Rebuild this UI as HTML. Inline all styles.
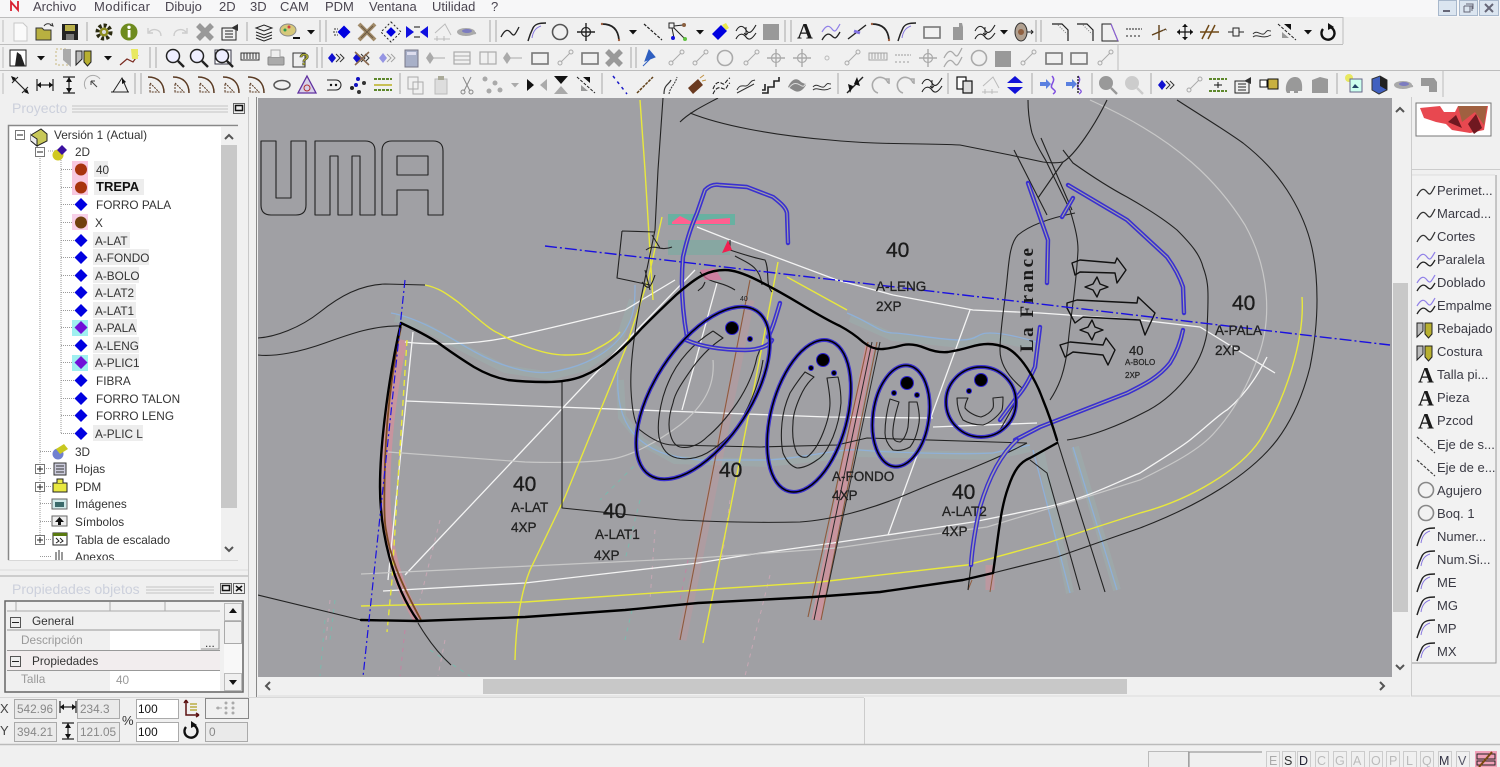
<!DOCTYPE html>
<html><head><meta charset="utf-8"><title>CAD</title>
<style>
html,body{margin:0;padding:0;background:#f0f0f0;width:1500px;height:767px;overflow:hidden}
svg{display:block;filter:blur(.35px)}
text{font-family:"Liberation Sans",sans-serif}
.m{font-size:13px;fill:#4a4550}
.t{font-size:11.8px;fill:#333}
.l{font-size:13px;fill:#3a3a44}
.n{fill:#1c1c1c;font-size:21px;stroke:#1c1c1c;stroke-width:.35}
.s{fill:#222;font-size:13.5px;stroke:#222;stroke-width:.3}
.c{fill:none;stroke:#222;stroke-width:1.1;stroke-linejoin:round}
.w{fill:none;stroke:#f4f4f4;stroke-width:1.3}
.g{fill:none;stroke:#c8c8c8;stroke-width:1.2}
.y{fill:none;stroke:#e8e83c;stroke-width:1.4}
.b{fill:none;stroke:#8fb0d8;stroke-width:1.3}
.k{fill:none;stroke:#000;stroke-width:2.4;stroke-linejoin:round;stroke-linecap:round}
.bd{fill:none;stroke:#3a30d0;stroke-width:4.4;stroke-linecap:round;stroke-linejoin:round}
.bi{fill:none;stroke:#a0a0a4;stroke-width:1.2}
.r{fill:none;stroke:#8f5a3c;stroke-width:1.1}
.p{fill:none;stroke:#c8949e;stroke-width:9}
.f{fill:#f0f0f0;stroke:#b0b0b0}
</style></head><body>
<svg width="1500" height="767" viewBox="0 0 1500 767" xmlns="http://www.w3.org/2000/svg">
<defs>
<g id="doc"><path d="M-6-9H3L7-5V9H-6Z" fill="#fafafa" stroke="#c8c8c8"/></g>
<g id="open"><path d="M-9 8V-4H-3L-1-2H6V8Z" fill="#b8b040" stroke="#333"/><path d="M-1-6C1-9 5-9 7-6M5-7L8-6L7-9" fill="none" stroke="#333"/></g>
<g id="save"><rect x="-8" y="-8" width="16" height="16" fill="#222"/><rect x="-5" y="-7" width="10" height="6" fill="#b9b04a"/><rect x="-4" y="2" width="8" height="6" fill="#777"/></g>
<g id="gear"><circle r="6.5" fill="none" stroke="#2a2a10" stroke-width="4" stroke-dasharray="3 2"/><circle r="4.5" fill="#8d8d20"/><circle r="2" fill="#ddd"/></g>
<g id="info"><circle r="8.5" fill="#6e8b1f"/><rect x="-1.3" y="-2" width="2.8" height="7.5" fill="#fff"/><circle cy="-4.7" r="1.7" fill="#fff"/></g>
<g id="und"><path d="M6 4C6-3-2-4-6 0M-7-4V1H-2" fill="none" stroke="#ccc" stroke-width="1.4"/></g>
<g id="red"><path d="M-6 4C-6-3 2-4 6 0M7-4V1H2" fill="none" stroke="#ccc" stroke-width="1.4"/></g>
<g id="bx"><path d="M-7-7L7 7M7-7L-7 7" stroke="#999" stroke-width="5.5"/></g>
<g id="prop"><rect x="-8" y="-4" width="14" height="12" fill="#eee" stroke="#222"/><path d="M-5-1H3M-5 2H3M-5 5H3" stroke="#222"/><path d="M1-4L8-8V-1Z" fill="#333"/></g>
<g id="lay"><path d="M-8-4L0-7L8-4L0-1Z" fill="#eee" stroke="#222"/><path d="M-8 0L0 3L8 0M-8 3L0 6L8 3M-8 6L0 9L8 6" fill="none" stroke="#222"/></g>
<g id="pal"><ellipse cx="-2" cy="-2" rx="8" ry="6" fill="#d6c87a" stroke="#888"/><circle cx="-5" cy="-2" r="1.5" fill="#2a9a4a"/><circle cx="-1" cy="-5" r="1.5" fill="#d04040"/><rect x="3" y="5" width="7" height="2" fill="#111"/></g>
<g id="dr"><path d="M-4-2H4L0 2.5Z" fill="#111"/></g>
<g id="dg"><path d="M-4-2H4L0 2.5Z" fill="#aaa"/></g>
<g id="di"><path d="M0-6.5L6.5 0L0 6.5L-6.5 0Z" fill="#0000e0"/></g>
<g id="dfw"><use href="#di" x="1"/><path d="M-9-3H-5M-10 0H-6M-9 3H-5" stroke="#333" stroke-dasharray="2 1"/></g>
<g id="dx"><path d="M-8-8L8 8M8-8L-8 8" stroke="#a08a68" stroke-width="4"/><path d="M-6-6L6 6M6-6L-6 6" stroke="#6a5a44" stroke-width="1"/></g>
<g id="d2"><use href="#di" transform="scale(.75)"/><path d="M0-10L10 0L0 10L-10 0Z" fill="none" stroke="#222" stroke-dasharray="2 2"/></g>
<g id="dlr"><path d="M-11-6L-3 0L-11 6ZM11-6L3 0L11 6Z" fill="#1010e0"/><path d="M-3-5H3M-3 5H3" stroke="#111"/></g>
<g id="tree"><path d="M-8 7H8M-7 1L3-8L9 3" fill="none" stroke="#bbb"/><path d="M-5 4V9M2 4V9" stroke="#bbb"/></g>
<g id="eye"><ellipse cx="-1" rx="9" ry="4" fill="#aaa"/><path d="M-2 3L9 1" stroke="#aaa" stroke-width="2"/><ellipse cx="0" cy="-1" rx="5" ry="2" fill="#7c7cc0"/></g>
<g id="wv"><path d="M-9 5C-5-3-2-3 1 1S5 3 9-5" class="ci" fill="none" stroke="currentColor" stroke-width="1.3"/></g>
<g id="wp"><path d="M-9 -1C-5-8-2-8 1-4S5-2 9-9" fill="none" stroke="#9080e8" stroke-width="1.2"/><path d="M-9 7C-5 0-2 0 1 3S5 6 9-1" fill="none" stroke="#222" stroke-width="1.3"/></g>
<g id="ns"><path d="M-9 9C-7 2-6 0-4-4S2-9 9-9" fill="none" stroke="#222" stroke-width="1.4"/><path d="M-5 6C-4 0-2-4 4-6" fill="none" stroke="#8878e0"/></g>
<g id="cir"><circle r="7.5" fill="none" stroke="currentColor" stroke-width="1.6"/></g>
<g id="cross"><circle r="4.5" fill="none" stroke="currentColor" stroke-width="1.2"/><path d="M-9 0H9M0-9V9" stroke="currentColor" stroke-width="1.4"/></g>
<g id="arc"><path d="M-9-8C0-8 7-4 8 8" fill="none" stroke="#222" stroke-width="1.7"/><circle cx="-9" cy="-8" r="1.2" fill="#a06040"/><circle cx="8" cy="8" r="1.2" fill="#a06040"/></g>
<g id="dash"><path d="M-9-8L9 8" stroke="currentColor" stroke-width="1.2" stroke-dasharray="3 1.5"/></g>
<g id="ang"><rect x="-9" y="-9" width="5" height="5" fill="none" stroke="#222"/><path d="M-6-4L-4 6M-4-6L5-7M-4-4L6 6" stroke="#222"/><circle cx="-5" cy="6" r="2" fill="#1010e0"/><circle cx="6" cy="-7" r="2" fill="#8a6040"/><circle cx="7" cy="7" r="2" fill="#60c040"/></g>
<g id="cube"><path d="M-8 2L1-7L7-1L-2 8Z" fill="#0000e0"/><path d="M2-7L6-9L9-4L6-2Z" fill="#e8e850"/></g>
<g id="wwa"><path d="M-10-1C-7-7-3-7 0-2S6 0 10-7M-10 7C-7 1-3 1 0 5S6 7 10 1" fill="none" stroke="#222" stroke-width="1.1"/><path d="M0-5V3M-2 1L0 3L2 1" fill="none" stroke="#222"/></g>
<g id="sq"><rect x="-8" y="-8" width="16" height="16" fill="#999"/></g>
<g id="A"><text x="-8" y="6.500" style="font-family:'Liberation Serif',serif;font-weight:700;font-size:22px" fill="#1a1a1a">A</text></g>
<g id="ln1"><path d="M-9 7L9-7" stroke="#222" stroke-width="1.4"/><path d="M-3-1L3 1" stroke="#8070e0" stroke-width="3"/></g>
<g id="rc"><rect x="-8" y="-5" width="16" height="11" fill="none" stroke="#777" stroke-width="1.6"/></g>
<g id="sil"><path d="M-5-5L1-5L1-9H4L5-5V8H-5Z" fill="#999"/></g>
<g id="bb"><ellipse rx="6" ry="9" fill="#b0a090" stroke="#333"/><circle r="3" fill="#906040"/><path d="M6 0H12M10-2L12 0L10 2" fill="none" stroke="#222"/></g>
<g id="cor"><path d="M-8-8H2L8-2V9" fill="none" stroke="#222" stroke-width="1.2"/><path d="M-2-7L7 2" stroke="#777" stroke-dasharray="1 1.5"/></g>
<g id="qd"><path d="M-8-8H1L8 9H-8Z" fill="none" stroke="#222"/><path d="M1-8L8 9" stroke="#9060e0"/></g>
<g id="rul"><path d="M-8-3H8M-7 3V5M-3 3V5M1 3V5M5 3V5" stroke="#222" stroke-dasharray="2 1"/></g>
<g id="br"><path d="M-8 3L6-3" stroke="#604018" stroke-width="1.4"/><path d="M-1-7L-1 8" stroke="#604018" stroke-width="1.4"/><path d="M3-2H9" stroke="#777" stroke-dasharray="1 2"/></g>
<g id="mv"><path d="M-8 0H8M0-8V8" stroke="#111" stroke-width="1.2"/><path d="M-8 0L-5-3V3ZM8 0L5-3V3ZM0-8L-3-5H3ZM0 8L-3 5H3Z" fill="#111"/></g>
<g id="par"><path d="M-7 7L0-7M-1 7L6-7M-9 0H10" stroke="#704a18" stroke-width="1.5"/></g>
<g id="nod"><rect x="-3" y="-4" width="6" height="8" fill="none" stroke="#222"/><path d="M-8 0H-3M3 0H8" stroke="#222"/></g>
<g id="mir"><path d="M-9-8L9 8" stroke="#222" stroke-dasharray="3 1.5"/><path d="M-3-8L4-8L4-2Z" fill="#111"/><path d="M-5 0L2 6H-5Z" fill="#999"/></g>
<g id="rot"><path d="M-5-4A6.5 6.5 0 1 0 2-6" fill="none" stroke="#111" stroke-width="2.4"/><path d="M0-10V-3L6-6Z" fill="#111"/></g>
<g id="cat"><rect x="-8" y="-8" width="16" height="16" fill="#fff" stroke="#222"/><path d="M-3 8L-1-6L3-3L7 8Z" fill="#222"/></g>
<g id="pen"><path d="M-9 7V-7H-3V1Z" fill="#bbb" stroke="#222"/><path d="M-1-7H6V4L2.500 8L-1 4Z" fill="#b8b030" stroke="#222"/></g>
<g id="ptag"><path d="M-9 7L-2 1L4 4L9-3" fill="none" stroke="#7a2a20" stroke-width="1.2"/><path d="M2-9H9V1L3 1Z" fill="#e8e860"/></g>
<g id="ppen"><rect x="-6" y="-9" width="12" height="16" fill="none" stroke="#c8b880" stroke-dasharray="2 2"/><path d="M1-9H9V9L1 2Z" fill="#aaa"/></g>
<g id="zoomic"><circle cx="-2" cy="-2" r="6.5" fill="#eef" stroke="#222" stroke-width="1.5"/><path d="M3 3L9 9" stroke="#222" stroke-width="2.4"/></g>
<g id="mag"><circle cx="-2" cy="-2" r="6.5" fill="currentColor" stroke="currentColor"/><path d="M3 3L9 9" stroke="currentColor" stroke-width="2.4"/></g>
<g id="zoo2"><rect x="-9" y="-8" width="16" height="14" fill="#fff" stroke="#334"/><use href="#zoomic"/></g>
<g id="prin"><rect x="-8" y="-1" width="16" height="8" rx="1" fill="#aaa" stroke="#888"/><path d="M-5-1V-8H4V-1" fill="#eee" stroke="#aaa"/></g>
<g id="hlp"><rect x="-8" y="-5" width="12" height="14" fill="#eee" stroke="#333"/><text x="-2" y="7" style="font-size:17px;font-weight:700" fill="#a8a830" stroke="#222" stroke-width=".4">?</text></g>
<g id="tbar"><rect x="-9" y="-4" width="18" height="7" fill="none" stroke="#333"/><path d="M-6-4V2M-3-4V2M0-4V2M3-4V2M6-4V2" stroke="#333"/></g>
<g id="dds"><path d="M-9 0L-5-5L-1 0L-5 5Z" fill="#1010d0"/><path d="M-1-4L3 0L-1 4M3-4L7 0L3 4" fill="none" stroke="#333"/></g>
<g id="calc"><rect x="-7" y="-8" width="13" height="17" fill="#a8b0c8" stroke="#778"/><rect x="-5" y="-6" width="9" height="3" fill="#dde"/></g>
<g id="nd2"><path d="M-7 0H9" stroke="currentColor"/><path d="M-6-6L-2 0L-6 6L-10 0Z" fill="currentColor"/></g>
<g id="tbl"><rect x="-8" y="-6" width="16" height="12" fill="none" stroke="currentColor" stroke-width="1.2"/><path d="M-8-2H8M-8 2H8" stroke="currentColor"/></g>
<g id="tb2"><rect x="-8" y="-6" width="16" height="12" fill="none" stroke="currentColor" stroke-width="1.2"/><path d="M0-6V6" stroke="currentColor"/></g>
<g id="nl"><circle cx="-5" cy="5" r="2" fill="none" stroke="currentColor"/><circle cx="6" cy="-6" r="2" fill="none" stroke="currentColor"/><path d="M-4 4L5-5" stroke="currentColor"/></g>
<g id="dimh"><path d="M-8-6V6M8-6V6M-8 0H8" stroke="#222" stroke-width="1.2"/><path d="M-8 0L-4-3V3ZM8 0L4-3V3Z" fill="#111"/></g>
<g id="dimv"><path d="M-6-8H6M-6 8H6M0-8V8" stroke="#222" stroke-width="1.2"/><path d="M0-8L-3-3H3ZM0 8L-3 3H3Z" fill="#111"/></g>
<g id="dima"><path d="M-8-8L8 8" stroke="#222" stroke-width="1.2"/><path d="M-9-9L-4-7L-7-4ZM9 9L4 7L7 4Z" fill="#111"/><path d="M-8-2L-2-8M2 8L8 2" stroke="#222"/></g>
<g id="dimc"><path d="M-8 4A8 8 0 0 1 6-6" fill="none" stroke="#aaa"/><path d="M-3-4L3 2M-3-4H1M-3-4V0" fill="none" stroke="#444"/></g>
<g id="dimt"><path d="M-9 7H9M-7 7L2-7L8 7" fill="none" stroke="#222"/><path d="M2-7L6-3L2-1Z" fill="#111"/></g>
<g id="arc2"><path d="M-8-8C2-8 8-2 8 8" fill="none" stroke="#5a3a22" stroke-width="1.5"/><path d="M-6 7V-2L3 7Z" fill="none" stroke="#5a3a22" stroke-dasharray="2 1"/></g>
<g id="ell"><ellipse rx="8" ry="4.500" fill="none" stroke="#555" stroke-width="1.5"/></g>
<g id="tri"><path d="M0-9L9 8H-9Z" fill="#d8d0e8" stroke="#6030a0" stroke-width="1.3"/><circle cy="3" r="3" fill="none" stroke="#b03030"/></g>
<g id="sld"><path d="M-6-5H3A5 5 0 0 1 3 5H-6" fill="none" stroke="#222"/><circle cx="-2" r="1.2" fill="#111"/><circle cx="3" r="1.2" fill="#111"/></g>
<g id="dots"><circle cx="-6" cy="3" r="2" fill="#222"/><circle cx="0" cy="-6" r="2" fill="#1010c0"/><circle cx="6" cy="-2" r="2" fill="#333"/><circle cx="1" cy="7" r="2" fill="#333"/><circle cx="-2" r="2" fill="#1010c0"/></g>
<g id="lst"><path d="M-9-6H9M-9 5H9" stroke="#4a7a10" stroke-width="1.8" stroke-dasharray="3 1"/><path d="M-9 0H9" stroke="#bbb020" stroke-width="1.6"/></g>
<g id="cp"><rect x="-8" y="-8" width="10" height="12" fill="none" stroke="#aaa"/><rect x="-3" y="-3" width="10" height="12" fill="none" stroke="#aaa"/></g>
<g id="pas"><path d="M-6-6H6V9H-6Z" fill="#ddd" stroke="#bbb"/><rect x="-3" y="-9" width="6" height="4" fill="#aa9"/></g>
<g id="sci"><path d="M-4-8L3 6M4-8L-3 6" stroke="#888"/><circle cx="-4" cy="7" r="2" fill="none" stroke="#888"/><circle cx="4" cy="7" r="2" fill="none" stroke="#888"/></g>
<g id="grp"><circle cx="-7" cy="-6" r="2.5" fill="#aaa"/><circle cx="3" cy="-2" r="2.5" fill="#aaa"/><circle cx="-3" cy="6" r="2.5" fill="#aaa"/><circle cx="8" cy="5" r="2.5" fill="#aaa"/></g>
<g id="el1"><path d="M-7-9L7 9" stroke="#1a1ac8" stroke-width="1.5" stroke-dasharray="3 4"/></g>
<g id="el2"><path d="M-8 8L8-8" stroke="#604018" stroke-width="1.5" stroke-dasharray="3 1"/></g>
<g id="el3"><path d="M-7 9C-7-1-2 0 0-5" fill="none" stroke="#333" stroke-width="1.2"/><path d="M-2 9C-1 2 4 0 6-8" fill="none" stroke="#333" stroke-dasharray="2 1"/></g>
<g id="dyn"><path d="M-8 3L2-6L7 0L-3 9Z" fill="#6a3a20"/><path d="M4-7L8-10M6-4L10-5" stroke="#c09040"/></g>
<g id="sw"><path d="M-8 4C-4-6 0-2 2-1S6-6 9-7M-8 9C-4 0 0 3 3 4S6-1 9-2" fill="none" stroke="#222" stroke-dasharray="4 1.5" stroke-width="1.1"/></g>
<g id="wz"><path d="M-9 5C-5-3-1 4 3-1S7-4 9-5M-9 8L8-1" fill="none" stroke="#333"/></g>
<g id="st"><path d="M-9 8H-3V2H3V-4H8V-8M-9 5H-6V-1" fill="none" stroke="#222" stroke-width="1.6"/></g>
<g id="blob"><path d="M-9 2C-5-7 0-7 3-4S8-2 9 0C5 7 0 8-4 5Z" fill="#888"/><path d="M-8 3C-4-3 0-2 3 0S7 2 9-2" fill="none" stroke="#ddd"/></g>
<g id="w3"><path d="M-9 2C-5-3 0 5 3 1S6-1 9-1M-9 5C-5 1 0 8 9 3" fill="none" stroke="#333"/></g>
<g id="cut"><path d="M-8 8L8-8" stroke="#222" stroke-width="1.4"/><path d="M2-8L-1-1L5 1ZM-5 8L-2 1L-7-1Z" fill="#111"/></g>
<g id="rd1"><path d="M-3 8A8 8 0 1 1 7-2M4-6H8V-1" fill="none" stroke="#aaa" stroke-width="1.6"/></g>
<g id="cop"><rect x="-8" y="-8" width="9" height="12" fill="#fff" stroke="#111" stroke-width="1.2"/><rect x="-2" y="-4" width="9" height="12" fill="#ddd" stroke="#111" stroke-width="1.2"/></g>
<g id="ud"><path d="M0-9L8-2H-8ZM0 9L8 2H-8Z" fill="#1010d8"/></g>
<g id="lrg"><path d="M-10-6L-3 0L-10 6Z" fill="#111"/><path d="M10-6L3 0L10 6Z" fill="#aaa"/></g>
<g id="hg"><path d="M-7-9H7L0-1Z" fill="#111"/><path d="M-7 9H7L0 1Z" fill="#aaa"/></g>
<g id="ar1"><path d="M-9-3H-3V-6L2-1L-3 4V1H-9Z" fill="#5a80e0"/><path d="M3-9C8-4 0 0 3 3S8 6 4 9" fill="none" stroke="#8050e0" stroke-width="1.5"/></g>
<g id="ar2"><path d="M-9-3H-3V-6L2-1L-3 4V1H-9Z" fill="#5a80e0"/><path d="M3-9C8-4 0 0 3 3S8 6 4 9" fill="none" stroke="#8050e0" stroke-width="1.3"/><path d="M3-9V9" stroke="#111" stroke-dasharray="2 1" stroke-width="1.3"/></g>
<g id="gblob"><path d="M-8 6C-9-3-4-8 1-8S9-4 8 6H4V8H0V6H-4V8H-7Z" fill="#999"/></g>
<g id="gsq"><path d="M-8-5L0-8L8-6V8H-8Z" fill="#999"/></g>
<g id="bar"><path d="M-9-6H9M-9 6H9" stroke="#4a7a10" stroke-width="1.8" stroke-dasharray="3 1"/><path d="M-4 0H4M0-3V3" stroke="#111"/></g>
<g id="chk"><rect x="-9" y="-5" width="7" height="7" fill="#fff" stroke="#111"/><rect x="-1" y="-6" width="10" height="10" fill="#c8b040" stroke="#111"/></g>
<g id="imi"><circle cx="-6" cy="-7" r="4" fill="#e8e860"/><rect x="-5" y="-6" width="12" height="13" fill="#cfe" stroke="#668"/><path d="M-3 3L0-1L4 3Z" fill="#246"/></g>
<g id="cub"><path d="M-7-6L1-9L8-5V5L0 9L-7 5Z" fill="#4060c0" stroke="#333"/><path d="M1-9V1L8 5V-5Z" fill="#222"/></g>
<g id="twoc"><path d="M-9-7H4L7-3V7H-1V1H-9Z" fill="#999"/></g>
</defs>

<rect width="1500" height="767" fill="#f0f0f0"/>
<!-- menu -->
<rect x="0" y="0" width="1500" height="17" fill="#f7f7f8"/>
<path d="M11 11V2L18 10V1" fill="none" stroke="#d82030" stroke-width="1.8"/>
<text class="m" x="33" y="11">Archivo</text><text class="m" x="94" y="11" textLength="56">Modificar</text><text class="m" x="165" y="11">Dibujo</text><text class="m" x="219" y="11">2D</text><text class="m" x="250" y="11">3D</text><text class="m" x="280" y="11">CAM</text><text class="m" x="325" y="11">PDM</text><text class="m" x="369" y="11">Ventana</text><text class="m" x="432" y="11">Utilidad</text><text class="m" x="491" y="11">?</text>
<g fill="#dbe5f0" stroke="#a8b8cc"><rect x="1438.500" y=".5" width="18" height="15"/><rect x="1459.500" y=".5" width="18" height="15"/><rect x="1479.500" y=".5" width="19" height="15"/></g>
<path d="M1443 11H1450" stroke="#667" stroke-width="2"/><path d="M1464 6H1472V11M1464 6V12H1470V6M1466 4H1473V9" fill="none" stroke="#667"/><path d="M1485 4L1493 12M1493 4L1485 12" stroke="#667" stroke-width="2"/>

<!-- toolbar lines -->
<path d="M0 17.500H1343M0 44.500H1343M0 70.500H1500M1343 17V44M1118 44V70M1443 71V97" fill="none" stroke="#bdbdbd"/>
<path d="M3 20V42M3 47V68M3 73V94" stroke="#bbb"/>
<g stroke="#a8a8a8"><path d="M87 22V41M247 22V41M320 20V42M326 20V42M490 20V42M496 20V42M785 20V42M791 20V42M1036 20V42M1041 20V42"/>
<path d="M150 47V68M156 47V68M317 47V68M322 47V68M631 47V68M636 47V68"/>
<path d="M135 73V94M141 73V94M400 73V94M602 73V94M838 73V94M948 73V94M1032 73V94M1092 73V94M1151 73V94M1337 73V94"/></g>

<!-- row 1 -->
<g color="#222">
<use href="#doc" x="20" y="32"/><use href="#open" x="45" y="32"/><use href="#save" x="70" y="32"/><use href="#gear" x="104" y="32"/><use href="#info" x="129" y="32"/><use href="#und" x="155" y="32"/><use href="#red" x="180" y="32"/><use href="#bx" x="205" y="32"/><use href="#prop" x="230" y="32"/><use href="#lay" x="264" y="32"/><use href="#pal" x="290" y="32"/><use href="#dr" x="311" y="32"/>
<use href="#dfw" x="343" y="32"/><use href="#dx" x="367" y="32"/><use href="#d2" x="391" y="32"/><use href="#dlr" x="417" y="32"/><use href="#tree" x="442" y="32"/><use href="#eye" x="467" y="32"/>
<use href="#wv" x="510" y="32"/><use href="#ns" x="537" y="32"/><use href="#cir" x="560" y="32" color="#555"/><use href="#cross" x="586" y="32"/><use href="#arc" x="611" y="32"/><use href="#dr" x="633" y="32"/><use href="#dash" x="653" y="32"/><use href="#ang" x="678" y="32"/><use href="#dr" x="700" y="32"/><use href="#cube" x="720" y="32"/><use href="#wwa" x="746" y="32"/><use href="#sq" x="771" y="32"/>
<use href="#A" x="805" y="32"/><use href="#wp" x="831" y="33"/><use href="#ln1" x="857" y="32"/><use href="#arc" x="881" y="32"/><use href="#ns" x="907" y="32"/><use href="#rc" x="932" y="32"/><use href="#sil" x="958" y="32"/><use href="#wwa" x="985" y="32"/><use href="#dr" x="1004" y="32"/><use href="#bb" x="1021" y="32"/>
<use href="#cor" x="1060" y="32"/><use href="#cor" x="1085" y="32"/><use href="#qd" x="1110" y="32"/><use href="#rul" x="1134" y="32"/><use href="#br" x="1160" y="32"/><use href="#mv" x="1185" y="32"/><use href="#par" x="1209" y="32"/><use href="#nod" x="1236" y="32"/><use href="#w3" x="1262" y="32"/><use href="#mir" x="1287" y="32"/><use href="#dr" x="1308" y="32"/><use href="#rot" x="1328" y="33"/>
</g>

<!-- row 2 -->
<use href="#cat" x="18" y="58"/><use href="#dr" x="41" y="58"/><use href="#ppen" x="62" y="58"/><use href="#pen" x="85" y="58"/><use href="#dr" x="108" y="58"/><use href="#ptag" x="129" y="58"/>
<use href="#zoomic" x="175" y="58"/><use href="#zoomic" x="199" y="58"/><use href="#zoo2" x="224" y="58"/><use href="#tbar" x="250" y="57"/><use href="#prin" x="276" y="58"/><use href="#hlp" x="301" y="58"/>
<use href="#dds" x="337" y="58"/><use href="#dds" x="362" y="58"/><path d="M355 52L369 65M369 52L355 65" stroke="#8a6a50" stroke-width="1.6"/><use href="#dds" x="388" y="58" opacity=".4"/><use href="#calc" x="412" y="58"/>
<g color="#aaa"><use href="#nd2" x="436" y="58"/><use href="#tbl" x="462" y="58"/><use href="#tb2" x="488" y="58"/><use href="#nd2" x="513" y="58"/><use href="#rc" x="540" y="58"/><use href="#nl" x="565" y="58"/><use href="#rc" x="590" y="58"/><use href="#bx" x="614" y="58"/>
<use href="#nl" x="676" y="58"/><use href="#nl" x="700" y="58"/><use href="#cir" x="725" y="58"/><use href="#nl" x="751" y="58"/><use href="#cross" x="776" y="58"/><use href="#cross" x="802" y="58"/><use href="#nl" x="852" y="58"/><use href="#tbar" x="878" y="57" opacity=".4"/><use href="#rul" x="903" y="58" opacity=".4"/><use href="#cross" x="928" y="58"/><use href="#wv" x="953" y="53"/><use href="#wv" x="953" y="62"/><use href="#cir" x="979" y="58"/><use href="#sq" x="1003" y="59"/><use href="#nl" x="1028" y="58"/><use href="#rc" x="1054" y="58"/><use href="#rc" x="1079" y="58"/><use href="#nl" x="1105" y="58"/></g>
<circle cx="827" cy="58" r="2" fill="none" stroke="#bbb"/>
<path d="M649 50L655 57L645 61ZM651 58L643 66" fill="#2f5fc0" stroke="#2f5fc0"/>

<!-- row 3 -->
<use href="#dima" x="20" y="85"/><use href="#dimh" x="45" y="85"/><use href="#dimv" x="69" y="85"/><use href="#dimc" x="94" y="85"/><use href="#dimt" x="120" y="85"/>
<use href="#arc2" x="156" y="85"/><use href="#arc2" x="181" y="85"/><use href="#arc2" x="206" y="85"/><use href="#arc2" x="231" y="85"/><use href="#arc2" x="256" y="85"/><use href="#ell" x="282" y="85"/><use href="#tri" x="307" y="85"/><use href="#sld" x="333" y="85"/><use href="#dots" x="358" y="85"/><use href="#lst" x="383" y="85"/>
<use href="#cp" x="416" y="85"/><use href="#pas" x="441" y="85"/><use href="#sci" x="467" y="85"/><use href="#grp" x="492" y="85"/><use href="#dg" x="515" y="85"/><use href="#lrg" x="537" y="85"/><use href="#hg" x="561" y="85"/><use href="#mir" x="586" y="85"/>
<use href="#el1" x="620" y="85"/><use href="#el2" x="645" y="85"/><use href="#el3" x="671" y="85"/><use href="#dyn" x="696" y="85"/><use href="#sw" x="721" y="85"/><use href="#wz" x="746" y="85"/><use href="#st" x="771" y="85"/><use href="#blob" x="797" y="85"/><use href="#w3" x="822" y="85"/>
<use href="#cut" x="855" y="85"/><use href="#rd1" x="881" y="85"/><use href="#rd1" x="906" y="85"/><use href="#wwa" x="932" y="85"/>
<use href="#cop" x="965" y="85"/><use href="#tree" x="990" y="85"/><use href="#ud" x="1015" y="85"/>
<use href="#ar1" x="1049" y="85"/><use href="#ar2" x="1075" y="85"/>
<use href="#mag" x="1108" y="85" color="#999"/><g color="#ccc"><use href="#mag" x="1134" y="85"/></g>
<use href="#dds" x="1167" y="85"/><g color="#aaa"><use href="#nl" x="1194" y="85"/></g><use href="#bar" x="1218" y="85"/><use href="#prop" x="1243" y="85"/><use href="#chk" x="1269" y="85"/><use href="#gblob" x="1294" y="85"/><use href="#gsq" x="1320" y="85"/>
<use href="#imi" x="1355" y="85"/><use href="#cub" x="1379" y="85"/><use href="#eye" x="1404" y="85"/><use href="#twoc" x="1430" y="85"/>

<!-- left panel -->
<path d="M248.500 97V697" stroke="#c8c8c8"/><path d="M256.500 97V697" stroke="#888"/>
<text x="12" y="113" style="font-size:14px" fill="#ccd0dc">Proyecto</text>
<path d="M72 106H228M72 109H228M72 112H228" stroke="#c4c4c4"/>
<rect x="233.500" y="103.500" width="11" height="10" fill="#eee" stroke="#666"/><rect x="235.500" y="105.500" width="7" height="5" fill="none" stroke="#111" stroke-width="1.5"/>
<rect x="8" y="125" width="230" height="435" fill="#fff"/>
<path d="M8.500 560V125.500H238" fill="none" stroke="#888" stroke-width="1.5"/>
<path d="M8 560.500H238" stroke="#d8d8d8"/>
<rect x="221" y="127" width="17" height="433" fill="#f0f0f0"/><rect x="221" y="145" width="16" height="363" fill="#c8c8c8"/>
<path d="M225 139L229 135L233 139M225 547L229 551L233 547" fill="none" stroke="#555" stroke-width="2"/>
<g stroke="#999" stroke-dasharray="1 1" fill="none"><path d="M40 158V545M61 160V433M30 134H40M48 151H58"/><path d="M61 169.500H75M61 187.500H75M61 204.500H75M61 222.500H75M61 240.500H75M61 257.500H75M61 275.500H75M61 292.500H75M61 310.500H75M61 327.500H75M61 345.500H75M61 362.500H75M61 380.500H75M61 398.500H75M61 415.500H75M61 433.500H75M40 451.500H52M40 468.500H52M40 486.500H52M40 503.500H52M40 521.500H52M40 539.500H52M40 556.500H52"/></g>
<g fill="#fff" stroke="#777"><rect x="15.500" y="130.500" width="9" height="9"/><rect x="35.500" y="147.500" width="9" height="9"/><rect x="35.500" y="464.500" width="9" height="9"/><rect x="35.500" y="482.500" width="9" height="9"/><rect x="35.500" y="535.500" width="9" height="9"/></g>
<path d="M17 135H23M37 152H43M37 469H43M40 466V472M37 487H43M40 484V490M37 540H43M40 537V543" stroke="#222"/>
<path d="M31 135L41 129L47 134V141L37 146L31 141Z" fill="#c8c858" stroke="#222"/><path d="M31 141L37 146V139L31 135" fill="#eee" stroke="#222"/>
<circle cx="58" cy="155" r="5.500" fill="#d0c820"/><path d="M62 145L67 150L62 155L57 150Z" fill="#3a10a0"/>
<rect x="72" y="161" width="16" height="34" fill="#f8c8e0"/><rect x="72" y="214" width="16" height="16" fill="#f8d0e8"/><rect x="72" y="320" width="16" height="16" fill="#a0f0f0"/><rect x="72" y="355" width="16" height="16" fill="#a0f0f0"/>
<g fill="#ededed"><rect x="94" y="161" width="14" height="16"/><rect x="94" y="179" width="50" height="16"/><rect x="93" y="232" width="37" height="16"/><rect x="93" y="249" width="56" height="16"/><rect x="93" y="267" width="46" height="16"/><rect x="93" y="284" width="43" height="16"/><rect x="93" y="302" width="43" height="16"/><rect x="93" y="319" width="44" height="16"/><rect x="93" y="337" width="46" height="16"/><rect x="93" y="354" width="46" height="16"/><rect x="93" y="425" width="50" height="16"/></g>
<g fill="#a8340e"><circle cx="81" cy="169.500" r="6"/><circle cx="81" cy="187.500" r="6"/></g><circle cx="81" cy="222.500" r="6" fill="#70400e"/>
<g><use href="#di" x="81" y="204.500"/><use href="#di" x="81" y="240.500"/><use href="#di" x="81" y="257.500"/><use href="#di" x="81" y="275.500"/><use href="#di" x="81" y="292.500"/><use href="#di" x="81" y="310.500"/><use href="#di" x="81" y="345.500"/><use href="#di" x="81" y="380.500"/><use href="#di" x="81" y="398.500"/><use href="#di" x="81" y="415.500"/><use href="#di" x="81" y="433.500"/></g>
<path d="M81 321L87.500 327.500L81 334L74.500 327.500ZM81 356L87.500 362.500L81 369L74.500 362.500Z" fill="#7010d8"/>
<text class="t" x="54" y="139">Versión 1 (Actual)</text><text class="t" x="75" y="156">2D</text>
<text class="t" x="96" y="174">40</text><text class="t" x="96" y="191" style="font-weight:700;font-size:13px;fill:#111">TREPA</text><text class="t" x="96" y="209">FORRO PALA</text><text class="t" x="95" y="227">X</text><text class="t" x="95" y="245">A-LAT</text><text class="t" x="95" y="262">A-FONDO</text><text class="t" x="95" y="280">A-BOLO</text><text class="t" x="95" y="297">A-LAT2</text><text class="t" x="95" y="315">A-LAT1</text><text class="t" x="95" y="332">A-PALA</text><text class="t" x="95" y="350">A-LENG</text><text class="t" x="95" y="367">A-PLIC1</text><text class="t" x="96" y="385">FIBRA</text><text class="t" x="96" y="403">FORRO TALON</text><text class="t" x="96" y="420">FORRO LENG</text><text class="t" x="95" y="438">A-PLIC L</text>
<text class="t" x="75" y="456">3D</text><text class="t" x="75" y="473">Hojas</text><text class="t" x="75" y="491">PDM</text><text class="t" x="75" y="508">Imágenes</text><text class="t" x="75" y="526">Símbolos</text><text class="t" x="75" y="544">Tabla de escalado</text>
<clipPath id="ann"><rect x="50" y="548" width="170" height="12"/></clipPath><text class="t" x="75" y="561" clip-path="url(#ann)">Anexos</text>
<circle cx="58" cy="454" r="5.500" fill="#7080d0"/><path d="M56 449L64 444L68 449L60 454Z" fill="#c8c820"/>
<rect x="54" y="463" width="12" height="12" fill="#ccd" stroke="#333"/><path d="M56 466H64M56 469H64M56 472H64" stroke="#333"/>
<rect x="53" y="483" width="14" height="9" fill="#e8e840" stroke="#222"/><path d="M57 483V479H63V483" fill="#e8e840" stroke="#222"/>
<rect x="52" y="499" width="15" height="10" fill="#cfe8e8" stroke="#666"/><rect x="55" y="502" width="9" height="5" fill="#3a6a6a"/>
<rect x="52" y="516" width="15" height="10" fill="#eee" stroke="#666"/><path d="M59.500 517L64 522H55ZM58 522H61V525H58Z" fill="#111"/>
<rect x="53" y="533" width="14" height="12" fill="#fff" stroke="#222"/><rect x="53" y="533" width="14" height="3" fill="#5a7a10"/><path d="M56 538L59 541L56 543M60 538L63 541L60 543" fill="none" stroke="#222"/>
<path d="M56 560V552M59 560V550M62 560V552" stroke="#333"/>

<!-- props -->
<path d="M0 576H248" stroke="#aaa"/><path d="M0 570H248" stroke="#ddd"/>
<text x="12" y="594" style="font-size:14px" fill="#ccd0dc">Propiedades objetos</text>
<path d="M146 587H214M146 590H214M146 593H214" stroke="#c4c4c4"/>
<rect x="220.500" y="583.500" width="11" height="10" fill="#eee" stroke="#666"/><rect x="222.500" y="585.500" width="7" height="5" fill="none" stroke="#111" stroke-width="1.5"/>
<rect x="233.500" y="583.500" width="11" height="10" fill="#eee" stroke="#666"/><path d="M236 586L242 591M242 586L236 591" stroke="#111" stroke-width="1.5"/>
<rect x="5" y="601" width="238" height="91" fill="#f0f0f0" stroke="#666" stroke-width="1.500"/>
<path d="M7 611H220M16 602V611M110 602V611M165 602V611" stroke="#aaa"/>
<rect x="110" y="631" width="90" height="19" fill="#fff"/><rect x="110" y="671" width="110" height="20" fill="#fff"/>
<path d="M7 630H220M7 650.500H220M7 670.500H220" stroke="#999"/>
<rect x="7" y="651" width="213" height="19" fill="#f4e8ec" opacity=".4"/>
<rect x="10.500" y="617.500" width="10" height="10" fill="#eee" stroke="#555"/><rect x="10.500" y="656.500" width="10" height="10" fill="#eee" stroke="#555"/><path d="M12 622.500H19M12 661.500H19" stroke="#222"/>
<text class="t" x="32" y="625">General</text><text class="t" x="32" y="665">Propiedades</text><text class="t" x="21" y="644" style="fill:#999">Descripción</text><text class="t" x="21" y="683" style="fill:#999">Talla</text><text class="t" x="116" y="684" style="fill:#999">40</text>
<text class="t" x="205" y="647" style="fill:#333">...</text><path d="M201 649H219V631" fill="none" stroke="#999"/>
<rect x="224" y="603" width="18" height="87" fill="#f8f8f8"/>
<rect x="224.500" y="603.500" width="17" height="17" fill="#f0f0f0" stroke="#bbb"/><rect x="224.500" y="621.500" width="17" height="22" fill="#f0f0f0" stroke="#aaa"/><rect x="224.500" y="673.500" width="17" height="17" fill="#f0f0f0" stroke="#bbb"/>
<path d="M229 613L233 608L237 613ZM229 680L237 680L233 685Z" fill="#111"/>

<!-- coordinates -->
<path d="M0 697.500H864" stroke="#d8d8d8"/><path d="M864.500 698V745" stroke="#ccc"/><path d="M0 744.500H1500" stroke="#bbb" stroke-width="1.500"/>
<text class="l" x="0" y="713" style="fill:#444">X</text><text class="l" x="0" y="735" style="fill:#444">Y</text>
<g fill="#eaeaea" stroke="#aaa"><rect x="14.500" y="699.500" width="42" height="19"/><rect x="14.500" y="722.500" width="42" height="19"/><rect x="77.500" y="699.500" width="42" height="19"/><rect x="77.500" y="722.500" width="42" height="19"/><rect x="205.500" y="722.500" width="42" height="19"/></g>
<rect x="136.500" y="699.500" width="42" height="19" fill="#fff" stroke="#aaa"/><rect x="136.500" y="722.500" width="42" height="19" fill="#fff" stroke="#aaa"/>
<text class="t" x="17" y="713" style="fill:#888">542.96</text><text class="t" x="17" y="736" style="fill:#888">394.21</text><text class="t" x="80" y="713" style="fill:#888">234.3</text><text class="t" x="80" y="736" style="fill:#888">121.05</text><text class="t" x="138" y="713" style="fill:#111">100</text><text class="t" x="138" y="736" style="fill:#111">100</text><text class="t" x="209" y="736" style="fill:#888">0</text>
<text x="122" y="725" style="font-size:13px" fill="#333">%</text>
<use href="#dimh" x="68" y="707"/><use href="#dimv" x="68" y="731"/>
<path d="M186 700V715H199M186 700L184 703M186 700L188 703M199 715L196 713M199 715L196 717" fill="none" stroke="#5a1010" stroke-width="1.500"/><path d="M190 704H197M190 707H197M190 710H197" stroke="#b0a020" stroke-width="1.300"/>
<rect x="205.500" y="698.500" width="43" height="20" fill="#f0f0f0" stroke="#888"/><path d="M216 708H222" stroke="#aaa"/><g fill="#aaa"><circle cx="218" cy="708" r="1.500"/><circle cx="226" cy="703" r="1.500"/><circle cx="226" cy="708" r="1.500"/><circle cx="226" cy="713" r="1.500"/><circle cx="233" cy="703" r="1.500"/><circle cx="233" cy="708" r="1.500"/><circle cx="233" cy="713" r="1.500"/></g>
<use href="#rot" x="191" y="731"/>

<!-- status -->
<rect x="1148.500" y="751.500" width="40" height="16" fill="#eee" stroke="#bbb"/><path d="M1189 767V752H1262" fill="none" stroke="#888"/>
<g fill="#f0f0f0" stroke="#ccc"><rect x="1266.500" y="751.500" width="13" height="16"/><rect x="1282.500" y="751.500" width="13" height="16"/><rect x="1297.500" y="751.500" width="13" height="16"/><rect x="1315.500" y="751.500" width="13" height="16"/><rect x="1333.500" y="751.500" width="13" height="16"/><rect x="1351.500" y="751.500" width="13" height="16"/><rect x="1369.500" y="751.500" width="13" height="16"/><rect x="1386.500" y="751.500" width="13" height="16"/><rect x="1403.500" y="751.500" width="13" height="16"/><rect x="1420.500" y="751.500" width="13" height="16"/><rect x="1438.500" y="751.500" width="13" height="16"/><rect x="1456.500" y="751.500" width="13" height="16"/></g>
<g style="font-size:12.500px"><text x="1269" y="765" fill="#aaa">E</text><text x="1284" y="765" fill="#333">S</text><text x="1299" y="765" fill="#223">D</text><text x="1317" y="765" fill="#bbb">C</text><text x="1335" y="765" fill="#bbb">G</text><text x="1353" y="765" fill="#bbb">A</text><text x="1371" y="765" fill="#bbb">O</text><text x="1389" y="765" fill="#bbb">P</text><text x="1406" y="765" fill="#bbb">L</text><text x="1422" y="765" fill="#bbb">Q</text><text x="1439" y="765" fill="#334">M</text><text x="1458" y="765" fill="#556">V</text></g>
<rect x="1475" y="751" width="22" height="16" fill="#f0a0b8"/><path d="M1477 754H1495V759H1477ZM1477 761H1495V765H1477Z" fill="none" stroke="#222"/><path d="M1479 767L1492 752" stroke="#7a4a10" stroke-width="2"/>

<!-- scrollbars -->
<rect x="258" y="678" width="1134" height="17" fill="#f0f0f0"/><rect x="483" y="679" width="644" height="15" fill="#c8c8c8"/>
<path d="M270 682L266 686L270 690M1380 682L1384 686L1380 690" fill="none" stroke="#555" stroke-width="2"/>
<rect x="1393" y="283" width="15" height="329" fill="#c8c8c8"/>
<path d="M1396 112L1400 108L1404 112M1396 665L1400 669L1404 665" fill="none" stroke="#555" stroke-width="2"/>
<path d="M258 696H1410" stroke="#ddd"/>

<!-- right panel -->
<path d="M1411.500 97V696H1500M1412 169.500H1500" fill="none" stroke="#ccc"/>
<rect x="1416" y="103" width="75" height="33" fill="#fff" stroke="#777"/>
<path d="M1420 108L1440 106L1444 112L1455 112L1458 106H1488L1484 130L1470 133L1452 130L1446 124L1436 122L1424 118Z" fill="#e84850"/><path d="M1458 106H1487L1484 125L1475 112L1462 122Z" fill="#a06040"/><path d="M1448 122L1456 115L1462 128ZM1468 124L1476 114L1482 128L1474 134Z" fill="#701820"/>
<rect x="1412.500" y="175.500" width="83" height="487" fill="#f2f2f2"/><path d="M1496 175V663H1412" fill="none" stroke="#999"/>
<path d="M1412 175H1495" stroke="#ddd"/>
<g color="#333"><use href="#wv" x="1426" y="191"/><use href="#wv" x="1426" y="214"/><use href="#wv" x="1426" y="237"/></g>
<use href="#wp" x="1426" y="261"/><use href="#wp" x="1426" y="284"/><use href="#wp" x="1426" y="307"/>
<use href="#pen" x="1426" y="330"/><use href="#pen" x="1426" y="353"/>
<use href="#A" x="1426" y="376"/><use href="#A" x="1426" y="399"/><use href="#A" x="1426" y="422"/>
<g color="#444"><use href="#dash" x="1426" y="445"/><use href="#dash" x="1426" y="468"/></g>
<g color="#888"><use href="#cir" x="1426" y="490"/><use href="#cir" x="1426" y="513"/></g>
<use href="#ns" x="1426" y="537"/><use href="#ns" x="1426" y="560"/><use href="#ns" x="1426" y="583"/><use href="#ns" x="1426" y="606"/><use href="#ns" x="1426" y="629"/><use href="#ns" x="1426" y="652"/>
<text class="l" x="1437" y="195">Perimet...</text><text class="l" x="1437" y="218">Marcad...</text><text class="l" x="1437" y="241">Cortes</text><text class="l" x="1437" y="264">Paralela</text><text class="l" x="1437" y="287">Doblado</text><text class="l" x="1437" y="310">Empalme</text><text class="l" x="1437" y="333">Rebajado</text><text class="l" x="1437" y="356">Costura</text><text class="l" x="1437" y="379">Talla pi...</text><text class="l" x="1437" y="402">Pieza</text><text class="l" x="1437" y="425">Pzcod</text><text class="l" x="1437" y="449">Eje de s...</text><text class="l" x="1437" y="472">Eje de e...</text><text class="l" x="1437" y="495">Agujero</text><text class="l" x="1437" y="518">Boq. 1</text><text class="l" x="1437" y="541">Numer...</text><text class="l" x="1437" y="564">Num.Si...</text><text class="l" x="1437" y="587">ME</text><text class="l" x="1437" y="610">MG</text><text class="l" x="1437" y="633">MP</text><text class="l" x="1437" y="656">MX</text>

<!-- CAD canvas -->
<clipPath id="cv"><rect x="258" y="98" width="1134" height="579"/></clipPath>
<rect x="258" y="98" width="1134" height="579" fill="#a0a0a4"/>
<g clip-path="url(#cv)">
<!-- pale bands -->
<g fill="none" stroke="#9cb0ae" stroke-width="8" opacity=".5">
<path d="M395 318L425 327L465 349L505 369L551 376L585 367L618 344L633 300"/>
<path d="M620 380L622 417L642 442L675 460L767 463L860 453L993 456L1030 448"/>
<path d="M850 318L893 337L960 344L990 337L1040 347"/>
<path d="M1040 450L1070 593M1075 447L1117 590"/>
</g>
<!-- pink bands -->
<g class="p"><path class="p" d="M403 340C392 390 385 450 386 500C387 540 394 580 418 620"/><path class="p" d="M750 300L682 640" stroke-width="7" opacity=".35"/><path class="p" d="M870 345L816 620"/><path class="p" d="M990 565V590" stroke-width="7" opacity=".7"/></g>
<!-- artifact marks -->
<g fill="none" stroke-width="1" opacity=".45" stroke-dasharray="4 5"><path stroke="#f8b0c8" d="M330 600L326 640M440 520L420 600M445 640L438 676M655 530L650 600M730 500L722 560M770 575L745 676"/><path stroke="#50d8b8" d="M335 600L330 640M640 500L625 560M632 610L625 640M430 650L470 676M325 620L320 676M640 460L600 500"/><path stroke="#f060a0" d="M405 630L400 676M688 560L680 600"/></g>
<path d="M668 214H735V225H668Z" fill="#50b8a0" opacity=".7"/><path d="M672 222L680 216L690 221L730 218V224H672Z" fill="#ff6090"/><path d="M668 240H730V255H668Z" fill="#50b8a0" opacity=".3"/>

<!-- PUMA logo -->
<g class="c" stroke="#333"><path class="c" d="M261 141H276V198H291V141H306V205Q306 215 296 215H271Q261 215 261 205Z"/><path class="c" d="M315 215V141H365Q375 141 375 151V215H360V156H352V215H338V156H330V215Z"/><path class="c" d="M382 215V151Q382 141 392 141H433Q443 141 443 151V215H428V190H397V215ZM397 175H428V156H397Z"/></g>

<!-- light lines -->
<path class="b" d="M391 313C420 318 450 338 475 352S530 375 551 372S600 360 618 340S635 300 635 285"/>
<path class="b" d="M618 370C616 400 622 425 640 440S675 457 700 460H767C800 459 840 448 860 450S960 455 993 453L1030 445"/>
<path class="b" d="M847 313C870 322 880 333 893 333S940 340 960 340 975 333 990 333 1030 340 1040 343"/>
<path class="b" d="M1033 450L1070 593M1073 447L1117 590"/>
<path class="w" d="M405 342C430 345 470 345 505 338S571 323 625 310L675 280"/>
<path class="w" d="M413 332L388 580M405 575L608 360L695 270"/>
<path class="w" d="M406 401L558 407L693 412L827 417L933 418M933 427L1037 423"/>
<path class="g" d="M388 452L525 462C560 463 590 462 605 460C630 458 660 440 680 425C705 405 715 385 713 360"/>
<path class="w" d="M383 591L525 583L698 563L747 555L833 543L887 535L973 522L1047 507C1090 497 1110 485 1140 473C1160 460 1180 448 1190 440C1205 428 1222 412 1227 410C1245 395 1258 375 1267 357"/>
<path class="g" d="M361 574L698 558L837 548L913 537L987 527L1077 500L1140 480C1170 465 1200 450 1215 432C1235 410 1248 385 1258 357C1272 320 1270 270 1245 225C1220 185 1180 140 1090 100"/>
<path class="y" d="M361 606L525 602L698 590L820 582L967 565L1047 543L1140 513C1190 500 1240 470 1260 440C1285 400 1305 340 1302 297"/>
<path class="y" d="M425 285C440 288 448 295 458 302C475 316 490 330 498 333C510 340 540 355 565 355S590 352 598 348 615 338 620 332"/>
<path class="y" d="M640 100L645 170L653 300M662 217L648 280L625 350L565 497L530 570C522 590 516 620 515 660"/>
<path class="y" d="M778 262L760 357L730 510L703 643"/>
<path class="y" d="M787 277L847 310"/>
<path class="y" d="M407 340L398 480L392 580L387 632" stroke-dasharray="6 4"/>
<path class="w" d="M697 227L730 240L837 280L893 295L973 310L1040 313L1140 320L1200 327L1275 373"/>
<path class="w" d="M970 310L888 535M717 283L682 410"/>

<!-- red / brown diagonals -->
<path class="r" d="M750 280L680 640"/>
<path class="r" d="M868 342L808 617M877 342L821 620"/>
<path d="M872 342L814 620M880 342L826 597" fill="none" stroke="#2a2a2a" stroke-width="1"/>
<path d="M401 327C390 380 386 430 385 463C384 500 384 520 386 530C390 555 398 578 421 620" fill="none" stroke="#7a4a20" stroke-width="1.800"/>
<path d="M972 580L968 590M993 573L990 592" fill="none" stroke="#8f5a3c"/>

<!-- thin black -->
<path class="c" d="M258 355C275 357 300 352 325 343S375 325 401 326"/>
<path class="c" d="M258 338C275 337 300 328 320 312S360 285 385 284L425 285"/>
<path class="c" d="M361 620L258 595M418 623C428 640 440 655 451 665"/>
<path class="c" d="M562 382V508L680 520C720 522 760 523 800 522C830 520 870 510 910 493C945 478 985 465 1027 443"/>
<path class="c" d="M663 98L658 170L655 230L640 303C633 340 630 370 631 390C632 410 635 425 640 430C650 438 662 445 673 445L760 447L837 445L867 438L993 442L1027 443"/>
<path class="c" d="M622 231L655 232M622 231L617 278L650 285"/>
<path class="c" d="M718 98C705 105 690 112 680 122M690 113C720 125 770 135 830 140C880 145 920 143 960 145L1010 155L1043 162C1050 163 1057 163 1063 162C1075 155 1095 125 1107 100"/>
<path class="c" d="M1028 100C1028 115 1030 125 1032 133C1037 148 1045 158 1047 163L1070 210C1076 230 1078 240 1078 250C1076 290 1070 320 1068 345C1065 370 1060 385 1050 400"/>
<path class="c" d="M1041 138L1072 210M1014 150L1047 215M1038 198L1063 162"/>
<path class="c" d="M1075 213C1050 218 1030 225 1018 235C1010 243 1009 260 1007 280C1004 310 1000 330 1000 350C1000 365 1010 378 1022 388"/>
<path class="c" d="M1063 150L1073 163C1090 175 1110 188 1127 197C1150 210 1165 220 1177 230C1192 245 1200 255 1203 267C1208 280 1208 290 1208 297C1208 315 1207 325 1207 333C1204 350 1197 365 1187 377C1175 392 1160 405 1143 413C1120 425 1090 437 1067 440"/>
<path class="c" d="M1177 100C1200 115 1222 128 1243 143C1262 158 1275 172 1287 190C1298 207 1305 222 1310 240C1315 258 1317 280 1317 300C1317 325 1314 347 1310 367C1303 395 1292 420 1277 440C1250 475 1200 505 1140 528L1057 557L993 573"/>
<path d="M1030 460L1047 473L1080 590M1057 440L1105 592" class="c"/>
<path d="M971 565L968 590" class="c"/>

<!-- ellipse inner -->
<path class="c" d="M713 331L723 338C712 345 702 355 693 367C684 380 675 392 673 403C669 415 668 425 670 433C672 442 676 446 680 447C690 449 700 444 707 437C718 428 728 416 737 403C747 388 754 372 757 357C759 352 760 350 760 348"/>
<path class="c" d="M713 331C702 338 694 345 687 353C676 365 668 380 663 397C659 412 657 425 659 437C662 450 668 456 677 458C688 460 698 458 707 453C722 444 735 432 743 417C752 400 760 380 763 360"/>
<path class="c" d="M805 372L814 377C808 382 803 390 800 397C796 406 793 415 793 423C792 435 793 445 797 453C800 457 803 458 807 457C814 452 819 443 823 433C827 423 830 412 830 403C830 394 828 385 827 378L838 377C840 385 841 395 841 403C840 415 837 427 833 437C828 448 824 456 817 460C810 465 803 468 797 468C790 466 786 460 783 453C781 443 781 433 782 423C783 412 786 402 790 393C795 385 800 378 805 372Z"/>
<path class="c" d="M890 399L899 402C895 415 892 428 893 437C894 441 897 442 900 442C904 440 907 433 908 427C909 418 909 410 909 402L917 402C919 410 920 416 919 423C917 435 914 442 910 447C905 450 899 451 893 450C888 445 885 440 885 433C885 420 887 410 890 399Z"/>
<path class="c" d="M957 398H968C966 402 965 405 965 408C968 412 975 416 981 417C987 415 991 412 993 408C994 405 993 401 993 398L1003 397C1003 402 1003 406 1002 410C998 416 990 423 983 425C975 425 968 423 963 420C958 412 957 405 957 398Z"/>
<path class="c" d="M1000 430L1017 400"/>

<!-- tabs -->
<path class="c" d="M660 248L652 235M646 250C655 243 660 252 672 247M645 270L650 290M655 275C650 290 648 290 642 282"/>
<path class="c" d="M700 272C710 285 720 280 735 290M705 282C702 290 700 288 698 291M730 240V250C745 255 755 258 765 260C770 270 765 285 772 292M735 256C745 262 760 265 762 285" stroke="#1a1a1a"/>
<path d="M700 270L715 268L722 280L705 280Z" fill="#e070a0" opacity=".7"/><path d="M728 240L732 250L722 253Z" fill="#f02050"/>

<!-- blue outlines -->
<g class="bd"><path class="bd" d="M687 337C684 320 680 290 683 257C688 235 692 225 697 213L705 190C710 185 715 184 720 185L747 187L773 197C782 204 786 208 787 213L788 243"/><path class="bd" d="M780 303C775 320 772 330 768 337"/>
<path class="bd" d="M1028 183L1048 240L1047 283M1040 327L1035 367C1030 378 1025 388 1017 397L1000 420M1068 185L1127 220L1167 257C1175 268 1180 278 1183 287L1184 313M1183 330C1180 345 1175 355 1170 363C1158 378 1143 385 1127 393L1040 427L1015 440"/>
<path class="bd" d="M686 340C700 346 720 350 745 350C760 350 770 345 772 340"/>
<path class="bd" d="M1073 198L1062 217"/></g>
<g class="bi"><path class="bi" d="M687 337C684 320 680 290 683 257C688 235 692 225 697 213L705 190C710 185 715 184 720 185L747 187L773 197C782 204 786 208 787 213L788 243"/><path class="bi" d="M780 303C775 320 772 330 768 337"/>
<path class="bi" d="M1028 183L1048 240L1047 283M1040 327L1035 367C1030 378 1025 388 1017 397L1000 420M1068 185L1127 220L1167 257C1175 268 1180 278 1183 287L1184 313M1183 330C1180 345 1175 355 1170 363C1158 378 1143 385 1127 393L1040 427L1015 440"/>
<path class="bi" d="M686 340C700 346 720 350 745 350C760 350 770 345 772 340"/><path class="bi" d="M1073 198L1062 217"/></g>
<path class="bd" d="M1017 440C1000 455 988 480 980 507C975 530 972 550 971 565" stroke-width="6"/><path d="M1017 440C1000 455 988 480 980 507C975 530 972 550 971 565" fill="none" stroke="#a0a0a4" stroke-width="1.600"/>

<!-- ellipses -->
<g fill="none"><ellipse cx="703" cy="393" rx="48" ry="98" transform="rotate(33 703 393)" stroke="#3a30d0" stroke-width="4"/><ellipse cx="703" cy="393" rx="48" ry="98" transform="rotate(33 703 393)" stroke="#000" stroke-width="1.500"/>
<ellipse cx="809" cy="416" rx="38" ry="78" transform="rotate(15 809 416)" stroke="#3a30d0" stroke-width="4"/><ellipse cx="809" cy="416" rx="38" ry="78" transform="rotate(15 809 416)" stroke="#000" stroke-width="1.500"/>
<ellipse cx="901" cy="416" rx="28" ry="51" transform="rotate(8 901 416)" stroke="#3a30d0" stroke-width="4"/><ellipse cx="901" cy="416" rx="28" ry="51" transform="rotate(8 901 416)" stroke="#000" stroke-width="1.500"/>
<ellipse cx="981" cy="402" rx="35" ry="35" stroke="#3a30d0" stroke-width="4"/><ellipse cx="981" cy="402" rx="35" ry="35" stroke="#000" stroke-width="1.500"/></g>
<g fill="#000" stroke="#2a1fd0"><circle cx="732" cy="328" r="6.500"/><circle cx="750" cy="339" r="2.500"/><circle cx="823" cy="360" r="6.500"/><circle cx="811" cy="368" r="2.500"/><circle cx="834" cy="373" r="2.500"/><circle cx="907" cy="383" r="6.500"/><circle cx="894" cy="393" r="2.500"/><circle cx="917" cy="395" r="2.500"/><circle cx="981" cy="380" r="6.500"/><circle cx="969" cy="391" r="2.500"/></g>

<!-- main outline -->
<path class="k" d="M401 323Q431 337 444 347Q458 357 474 367Q491 377 508 380Q525 382 546 382Q568 382 583 376Q598 370 611 358Q625 347 642 328Q660 310 676 295Q693 280 703 275Q713 270 725 270Q737 270 757 280Q777 290 802 305Q827 320 840 326Q853 333 863 342Q873 350 883 349Q893 348 903 345Q913 343 925 348Q937 353 948 352Q960 350 970 347Q980 344 988 344Q997 344 1007 348Q1017 353 1027 368Q1037 383 1043 400Q1050 417 1057 440"/>
<path class="k" d="M401 323C390 370 380 440 380 487C380 530 392 585 418 621"/>
<path class="k" d="M361 620L418 621L525 617L625 610L698 603L813 597L880 592L963 580L993 573"/>
<path class="k" d="M993 573C998 540 1000 510 1008 488C1014 470 1020 462 1030 458L1057 443" stroke-width="2"/>

<!-- arrows -->
<g fill="none" stroke="#111" stroke-width="1.400" stroke-linejoin="round">
<path d="M1072 263L1080 260L1115 263L1117 258L1126 270L1117 283L1115 273L1080 272L1075 275Z"/>
<path d="M1067 303L1077 300L1137 303L1138 297L1155 313L1145 335L1140 320L1083 317L1075 323L1067 308Z"/>
<path d="M1060 345L1070 342L1103 345L1106 338L1115 350L1108 365L1103 355L1073 352L1065 357Z"/>
<path d="M1097 277L1100 284L1108 287L1100 290L1097 297L1093 290L1085 287L1093 284Z"/>
<path d="M1092 320L1095 327L1103 330L1095 333L1092 340L1088 333L1080 330L1088 327Z"/>
</g>

<!-- dash-dot axes -->
<path d="M545 246L1390 345" fill="none" stroke="#1a10e0" stroke-width="1.400" stroke-dasharray="12 3 2 3"/>
<path d="M405 280L363 677" fill="none" stroke="#1a10e0" stroke-width="1.200" stroke-dasharray="8 3 2 3"/>

<!-- labels -->
<text class="n" x="886" y="257">40</text><text class="s" x="876" y="291">A-LENG</text><text class="s" x="876" y="311">2XP</text>
<text class="n" x="1232" y="310">40</text><text class="s" x="1215" y="335">A-PALA</text><text class="s" x="1215" y="355">2XP</text>
<text x="1129" y="355" style="font-size:13px" fill="#222" stroke="#222" stroke-width=".25">40</text><text x="1125" y="365" style="font-size:8px" fill="#222" stroke="#222" stroke-width=".2">A-BOLO</text><text x="1125" y="378" style="font-size:8px" fill="#222" stroke="#222" stroke-width=".2">2XP</text>
<text class="n" x="513" y="491">40</text><text class="s" x="511" y="512">A-LAT</text><text class="s" x="511" y="532">4XP</text>
<text class="n" x="603" y="518">40</text><text class="s" x="595" y="539">A-LAT1</text><text class="s" x="594" y="560">4XP</text>
<text class="n" x="719" y="477">40</text><text class="s" x="832" y="481">A-FONDO</text><text class="s" x="832" y="500">4XP</text>
<text class="n" x="952" y="499">40</text><text class="s" x="942" y="516">A-LAT2</text><text class="s" x="942" y="536">4XP</text>
<text x="740" y="301" style="font-size:7px" fill="#222">40</text>
<text transform="translate(1033 352) rotate(-90)" textLength="104" style="font-family:'Liberation Serif',serif;font-weight:700;font-size:19px" fill="#1a1a1a">La France</text>
</g>
</svg>
</body></html>
